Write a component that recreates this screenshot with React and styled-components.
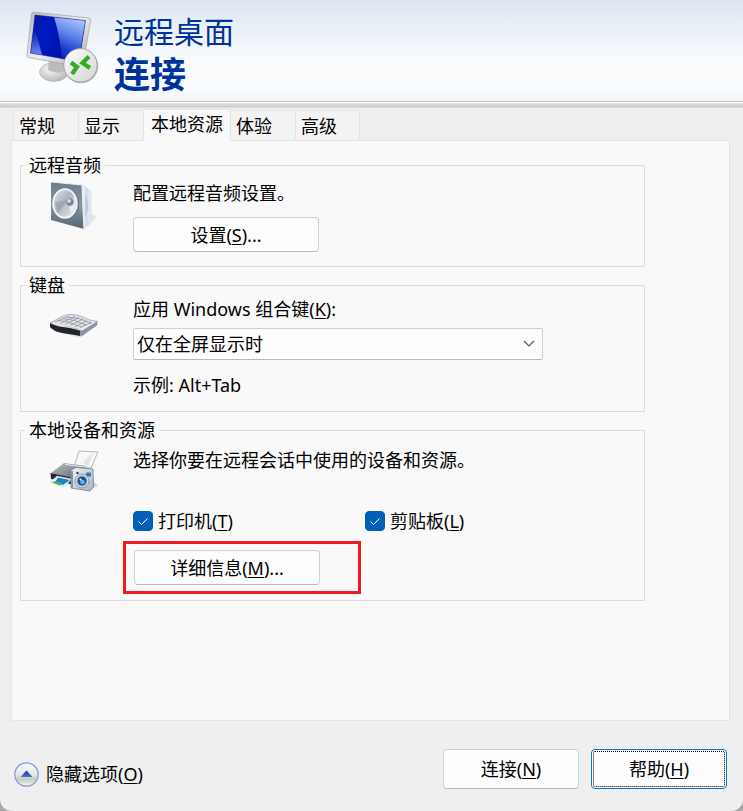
import React, { useState } from "react";
import styled, { createGlobalStyle, css } from "styled-components";

const GlobalStyle = createGlobalStyle`
  * { box-sizing: border-box; }
  body {
    margin: 0;
    background: #a9a9a9;
    color: #000;
    font: 18px/24px "Noto Sans", "Noto Sans CJK SC", sans-serif;
  }
  button, select, input { font: inherit; color: inherit; }
`;

const Window = styled.main`
  display: flex;
  flex-direction: column;
  min-height: 100vh;
  background: #efefef;
  border-radius: 0 0 12px 12px;
  overflow: hidden;
`;

const Banner = styled.header`
  display: flex;
  align-items: flex-start;
  gap: 14px;
  padding: 10px 24px 3px;
  background: linear-gradient(#dbe5f1, #e6edf6 20%, #f9fbfd 60%, #fbfcfd 85%, #f1f6fb);
`;

const Divider = styled.div`
  height: 8px;
  background: linear-gradient(
    #c8c8c8 1px, #fff 1px 2px, #e6e6e6 2px 3px, #d8d8d8 3px 5px, #cccccc 5px 6px, #dcdcdc 6px 7px, #ebebeb 7px
  );
`;

const Title = styled.h1`
  margin: 0;
  padding-top: 2px;
  color: #003399;
  font-size: 30px;
  line-height: 40px;
  font-weight: 400;
`;

const TitleStrong = styled.strong`
  display: block;
  font-size: 36px;
  line-height: 46px;
  font-weight: 700;
`;

const Tabs = styled.div`
  display: flex;
  align-items: flex-end;
  padding: 0 13px;
`;

const Tab = styled.button`
  min-width: 65px;
  height: 30px;
  padding: 0 6px 0 5px;
  text-align: left;
  border: 1px solid #e5e5e5;
  border-width: 1px 0 0 1px;
  background: #f3f3f3;
  &:last-child { border-right-width: 1px; }
  ${(p) => p.$active && css`
    height: 32px;
    padding: 0 7px 4px;
    margin-bottom: -1px;
    position: relative;
    background: #f9f9f9;
  `}
`;

const Panel = styled.section`
  flex: 1;
  display: flex;
  flex-direction: column;
  gap: 6px;
  margin: 0 13px 0 11px;
  padding: 12px 84px 24px 8px;
  border: 1px solid #e5e5e5;
  background: #f9f9f9;
`;

const Group = styled.fieldset`
  min-width: 0;
  margin: 0;
  padding: 0 4px;
  border: 1px solid #dcdcdc;
`;

const Legend = styled.legend`
  padding: 0 4px;
`;

const GroupBody = styled.div`
  display: grid;
  grid-template-columns: 83px minmax(0, 1fr);
  padding: ${(p) => p.$pad || "4px"} 0 14px 25px;
`;

const Fields = styled.div`
  display: flex;
  flex-direction: column;
  align-items: flex-start;
  gap: ${(p) => p.$gap || "12px"};
`;

const IconCell = styled.div`
  padding-top: ${(p) => p.$top || "0"};
  svg { display: block; }
`;

const Text = styled.p`
  margin: 0;
  padding-top: ${(p) => p.$top || "0"};
`;

const Button = styled.button`
  width: ${(p) => (p.$large ? "136px" : "186px")};
  height: ${(p) => (p.$large ? "40px" : "35px")};
  padding: 0;
  border: 1px solid #d0d0d0;
  border-bottom-color: #bababa;
  border-radius: 4px;
  background: #fdfdfd;
  ${(p) => p.$default && css`
    border-color: #0078d4;
    outline: 1px dotted #000;
    outline-offset: -3px;
  `}
`;

const Key = styled.u`
  text-decoration-thickness: 1px;
  text-underline-offset: 2px;
`;

const SelectBox = styled.div`
  display: grid;
  align-items: center;
  width: 100%;
  max-width: 410px;
  select, svg { grid-area: 1 / 1; }
  svg { justify-self: end; margin-right: 7px; pointer-events: none; }
`;

const Select = styled.select`
  appearance: none;
  width: 100%;
  height: 32px;
  padding: 0 28px 0 3px;
  border: 1px solid #d0d0d0;
  border-bottom-color: #b8b8b8;
  border-radius: 2px;
  background: #fdfdfd;
`;

const Checks = styled.div`
  display: grid;
  grid-template-columns: 232px auto;
  padding-top: 25px;
`;

const CheckLabel = styled.label`
  display: flex;
  align-items: center;
  gap: 5px;
`;

const CheckMark = styled.span`
  display: grid;
  input, svg { grid-area: 1 / 1; }
  svg { pointer-events: none; }
`;

const CheckInput = styled.input`
  appearance: none;
  width: 20px;
  height: 20px;
  margin: 0;
  border: 1px solid #868686;
  border-radius: 4px;
  background: #fff;
  &:checked { background: #005fb8; border-color: #005fb8; }
`;

const Highlight = styled.div`
  width: 238px;
  margin: -4px 0 -8px -10px;
  padding: 6px 8px;
  border: 3px solid #ed1c24;
  button { display: block; }
`;

const Footer = styled.footer`
  display: flex;
  align-items: center;
  gap: 12px;
  padding: 28px 16px 22px 14px;
`;

const Toggle = styled.button`
  display: flex;
  align-items: center;
  gap: 7px;
  margin: 10px auto 0 0;
  padding: 0;
  border: 0;
  background: none;
`;

function MonitorIcon() {
  return (
    <svg width="76" height="76" viewBox="24 10 76 76" aria-hidden="true">
      <defs>
        <linearGradient id="screen" x1="0" y1="0" x2="1" y2=".3">
          <stop offset="0" stopColor="#0a1a9c" /><stop offset=".35" stopColor="#0019c4" /><stop offset=".55" stopColor="#0016b4" /><stop offset="1" stopColor="#001199" />
        </linearGradient>
        <linearGradient id="shine" x1=".6" y1="0" x2=".3" y2="1">
          <stop offset="0" stopColor="#a8c6fa" /><stop offset=".4" stopColor="#5c80ea" /><stop offset=".75" stopColor="#1c38cc" /><stop offset="1" stopColor="#0a1fb8" />
        </linearGradient>
        <linearGradient id="corner" x1="0" y1="0" x2="0" y2="1">
          <stop offset=".2" stopColor="#86a7ec" stopOpacity="0" /><stop offset="1" stopColor="#93b3f5" stopOpacity=".75" />
        </linearGradient>
        <linearGradient id="bezel" x1="0" y1="0" x2="1" y2="1">
          <stop offset="0" stopColor="#b8b8b8" /><stop offset=".5" stopColor="#eeeeee" /><stop offset="1" stopColor="#a3a3a3" />
        </linearGradient>
        <radialGradient id="base" cx=".4" cy=".35" r=".7">
          <stop offset="0" stopColor="#fafafa" /><stop offset="1" stopColor="#b4b4b4" />
        </radialGradient>
        <linearGradient id="badge" x1="0" y1="0" x2="1" y2="1">
          <stop offset="0" stopColor="#fff" /><stop offset="1" stopColor="#d2d2d2" />
        </linearGradient>
      </defs>
      <ellipse cx="54" cy="72" rx="14.500" ry="9.500" fill="url(#base)" stroke="#b4b4b4" strokeWidth=".6" />
      <path d="M49 60 66 63 65 71Q57 75 48 70Z" fill="#bcbcbc" />
      <path d="M33 12 89 18Q91 18.500 90.500 21L83 65Q82 67 79 66.500L28 57.500Q26.500 57 27 54L31.500 14Q32 12 33 12Z" fill="url(#bezel)" stroke="#a2a2a2" strokeWidth=".7" />
      <path d="M35 15 85.500 20.500 79 61.500 30.500 53Z" fill="url(#screen)" />
      <path d="M54 17 85.500 20.500 79 61.500 62 58.500Q60 36 54 17Z" fill="url(#shine)" />
      <path d="M34 24 42 55 30.500 53Z" fill="url(#corner)" />
      <path d="M35 15 85.500 20.500 79 61.500 30.500 53Z" fill="none" stroke="#07118c" strokeWidth=".5" />
      <circle cx="81" cy="66" r="17.300" fill="#b6b6b6" />
      <circle cx="80.500" cy="65.300" r="16.700" fill="url(#badge)" stroke="#999" strokeWidth=".8" />
      <path d="M71 62.500 77 67 72 74" fill="none" stroke="#34ad20" strokeWidth="4.300" />
      <path d="M89 56.500 82.500 63 90 68" fill="none" stroke="#34ad20" strokeWidth="4.300" />
    </svg>
  );
}

function SpeakerIcon() {
  return (
    <svg width="48" height="50" viewBox="50 181 48 50" aria-hidden="true">
      <defs>
        <linearGradient id="box" x1="0" y1="0" x2="0" y2="1">
          <stop offset="0" stopColor="#6b7c8b" /><stop offset=".5" stopColor="#8797a4" /><stop offset="1" stopColor="#53636f" />
        </linearGradient>
        <linearGradient id="side"><stop offset="0" stopColor="#fff" /><stop offset=".5" stopColor="#cddced" /><stop offset="1" stopColor="#edf3fa" /></linearGradient>
        <linearGradient id="cone" x1="0" y1="0" x2="1" y2="1">
          <stop offset="0" stopColor="#dce3e9" /><stop offset=".45" stopColor="#aeb7c0" /><stop offset="1" stopColor="#eef1f4" />
        </linearGradient>
      </defs>
      <path d="M87 228 97 216 90 214Z" fill="#dedede" opacity=".7" />
      <path d="M82 185 91 191 91 221 84 229Z" fill="url(#side)" stroke="#bfcad5" strokeWidth=".5" />
      <path d="M85 195Q92 205 85 217Z" fill="#aebed0" opacity=".6" />
      <path d="M51 182 82 185 84 229 51 220Z" fill="url(#box)" />
      <path d="M51 182 82 185 84 229" fill="none" stroke="#e5edf4" strokeWidth="1.200" />
      <ellipse cx="66" cy="204" rx="13" ry="15.500" fill="#637583" />
      <ellipse cx="65" cy="203.500" rx="11.800" ry="14.300" fill="url(#cone)" stroke="#f4f7fa" strokeWidth="1.800" />
      <path d="M55 202 68 200 58 213Z" fill="#8d98a3" opacity=".5" />
      <path d="M69 204 75 197Q77 207 71 214Z" fill="#fff" opacity=".6" />
      <circle cx="70" cy="202" r="3.700" fill="#7b858f" />
      <circle cx="69" cy="201" r="2" fill="#d5dbe0" />
    </svg>
  );
}

function KeyboardIcon() {
  return (
    <svg width="50" height="28" viewBox="50 310 50 28" aria-hidden="true">
      <path d="M53 330 80 337 97 324 94 322Z" fill="#d4d4dc" opacity=".6" />
      <path d="M50 322 80 328 80 335Q74 333.500 65 332.500Q54 331 50 326Z" fill="#22252a" />
      <path d="M80 328 97 320 97.500 324 82 335Q80 336 80 333Z" fill="#8f94ab" />
      <path d="M50 322 64 314.500Q71 312 82 315.500Q88 319.500 97.500 320.500L82 330Q77 327 68 326Q57 326 50 322Z" fill="#e3e4e8" stroke="#85899a" strokeWidth=".6" />
      <path d="M55 321 69 315M60 322.500 75 315.500M65 323.500 79 316.500M70 324.500 83 318M75 325.500 87 320M80 326.500 92 321.500M58 319.500Q68 320 81 326M62 317.500Q74 318 86 324M67 316Q79 316 91 322" fill="none" stroke="#828690" strokeWidth=".7" />
      <path d="M53 322.500Q61 326 70 326.500L80 329 94 322" fill="none" stroke="#f3f4f7" strokeWidth=".8" />
    </svg>
  );
}

function DevicesIcon() {
  return (
    <svg width="50" height="46" viewBox="50 448 50 46" aria-hidden="true">
      <defs>
        <linearGradient id="lid" x1="0" y1="0" x2="1" y2="1"><stop offset="0" stopColor="#bec2c6" /><stop offset="1" stopColor="#555b61" /></linearGradient>
        <linearGradient id="camera" x1="0" y1="0" x2="1" y2="1"><stop offset="0" stopColor="#eef3f8" /><stop offset="1" stopColor="#a8b4bf" /></linearGradient>
      </defs>
      <path d="M79 451 98 452 91 468 74 467Z" fill="#f7f7f7" stroke="#a6a6a6" strokeWidth=".8" />
      <path d="M83 462 93 453 88 467Z" fill="#e4e4e4" />
      <path d="M51 473 64 463 86 466 75 480Z" fill="url(#lid)" />
      <path d="M65 464.500 85 467" stroke="#eee" strokeWidth="1" />
      <path d="M50.500 473 74 478 74 485 51 479Z" fill="#25292e" />
      <path d="M57 476 72 479 64 487 50 482Z" fill="#eef7fb" stroke="#b9c4ca" strokeWidth=".5" />
      <path d="M58 477.500 70 480 63 485 55 482Z" fill="#1680cb" />
      <path d="M55 481 62 483 60 485.500 52 482.500Z" fill="#43b451" />
      <path d="M84 491 98 486 93 481Z" fill="#aaa" opacity=".5" />
      <path d="M71 470 76 467.500 93 469 93.500 487 90 491 71 488Z" fill="url(#camera)" stroke="#74808b" strokeWidth=".8" />
      <path d="M71 471 73 471 73 488 71 487Z" fill="#8793a0" />
      <rect x="86" y="472.500" width="5" height="4" rx="1" fill="#297abd" />
      <rect x="76.500" y="472" width="2" height="2" fill="#1a3656" />
      <circle cx="82" cy="481" r="7" fill="#dfe6ed" stroke="#77838f" strokeWidth=".8" />
      <circle cx="82" cy="481" r="4.800" fill="#174c94" stroke="#7f96ae" strokeWidth="1.200" />
      <circle cx="82.500" cy="482" r="2.300" fill="#58b7f1" />
      <circle cx="80.500" cy="479.500" r="1" fill="#fff" />
    </svg>
  );
}

function CollapseIcon() {
  return (
    <svg width="25" height="25" viewBox="0 0 25 25" aria-hidden="true">
      <defs>
        <linearGradient id="orb" x1="0" y1="0" x2="0" y2="1">
          <stop offset="0" stopColor="#f7f9f8" /><stop offset=".5" stopColor="#e5e9e6" /><stop offset=".7" stopColor="#c4cbc7" /><stop offset="1" stopColor="#f5f9f7" />
        </linearGradient>
        <linearGradient id="ring" x1="0" y1="0" x2="0" y2="1"><stop offset="0" stopColor="#7f96ec" /><stop offset="1" stopColor="#929cb9" /></linearGradient>
        <linearGradient id="arrow" x1="0" y1="0" x2="0" y2="1"><stop offset="0" stopColor="#172c86" /><stop offset="1" stopColor="#4b74d6" /></linearGradient>
      </defs>
      <circle cx="12.500" cy="12.500" r="11.700" fill="url(#orb)" stroke="url(#ring)" strokeWidth="1.300" />
      <path d="M12.500 8.500 18.500 15H6.500Z" fill="url(#arrow)" />
    </svg>
  );
}

function Check({ children }) {
  const [on, setOn] = useState(true);
  return (
    <CheckLabel>
      <CheckMark>
        <CheckInput type="checkbox" checked={on} onChange={(e) => setOn(e.target.checked)} />
        {on && (
          <svg width="20" height="20" viewBox="0 0 20 20" aria-hidden="true">
            <path d="M5.500 10.500 8.500 13.500 14.500 7.500" fill="none" stroke="#fff" strokeWidth="1" />
          </svg>
        )}
      </CheckMark>
      <span>{children}</span>
    </CheckLabel>
  );
}

const tabs = ["常规", "显示", "本地资源", "体验", "高级"];

export default function App() {
  const [active, setActive] = useState("本地资源");
  return (
    <Window>
      <GlobalStyle />
      <Banner>
        <MonitorIcon />
        <Title>远程桌面<TitleStrong>连接</TitleStrong></Title>
      </Banner>
      <Divider />
      <Tabs role="tablist">
        {tabs.map((name) => (
          <Tab key={name} type="button" role="tab" aria-selected={name === active} $active={name === active} onClick={() => setActive(name)}>
            {name}
          </Tab>
        ))}
      </Tabs>
      <Panel role="tabpanel" aria-label={active}>
        <Group>
          <Legend>远程音频</Legend>
          <GroupBody>
            <IconCell><SpeakerIcon /></IconCell>
            <Fields>
              <Text>配置远程音频设置。</Text>
              <Button type="button">设置(<Key>S</Key>)...</Button>
            </Fields>
          </GroupBody>
        </Group>
        <Group>
          <Legend>键盘</Legend>
          <GroupBody $pad="0">
            <IconCell $top="14px"><KeyboardIcon /></IconCell>
            <Fields $gap="7px">
              <label htmlFor="combo">应用 Windows 组合键(<Key>K</Key>):</label>
              <SelectBox>
                <Select id="combo" defaultValue="full">
                  <option value="local">在这台计算机上</option>
                  <option value="remote">在远程计算机上</option>
                  <option value="full">仅在全屏显示时</option>
                </Select>
                <svg width="14" height="10" viewBox="0 0 14 10" aria-hidden="true">
                  <path d="M2 2 7 7 12 2" fill="none" stroke="#555" strokeWidth="1.200" />
                </svg>
              </SelectBox>
              <Text $top="6px">示例: Alt+Tab</Text>
            </Fields>
          </GroupBody>
        </Group>
        <Group>
          <Legend>本地设备和资源</Legend>
          <GroupBody $pad="6px">
            <IconCell><DevicesIcon /></IconCell>
            <Fields>
              <Text>选择你要在远程会话中使用的设备和资源。</Text>
              <Checks>
                <Check>打印机(<Key>T</Key>)</Check>
                <Check>剪贴板(<Key>L</Key>)</Check>
              </Checks>
              <Highlight><Button type="button">详细信息(<Key>M</Key>)...</Button></Highlight>
            </Fields>
          </GroupBody>
        </Group>
      </Panel>
      <Footer>
        <Toggle type="button"><CollapseIcon /><span>隐藏选项(<Key>O</Key>)</span></Toggle>
        <Button type="button" $large>连接(<Key>N</Key>)</Button>
        <Button type="button" $large $default>帮助(<Key>H</Key>)</Button>
      </Footer>
    </Window>
  );
}
